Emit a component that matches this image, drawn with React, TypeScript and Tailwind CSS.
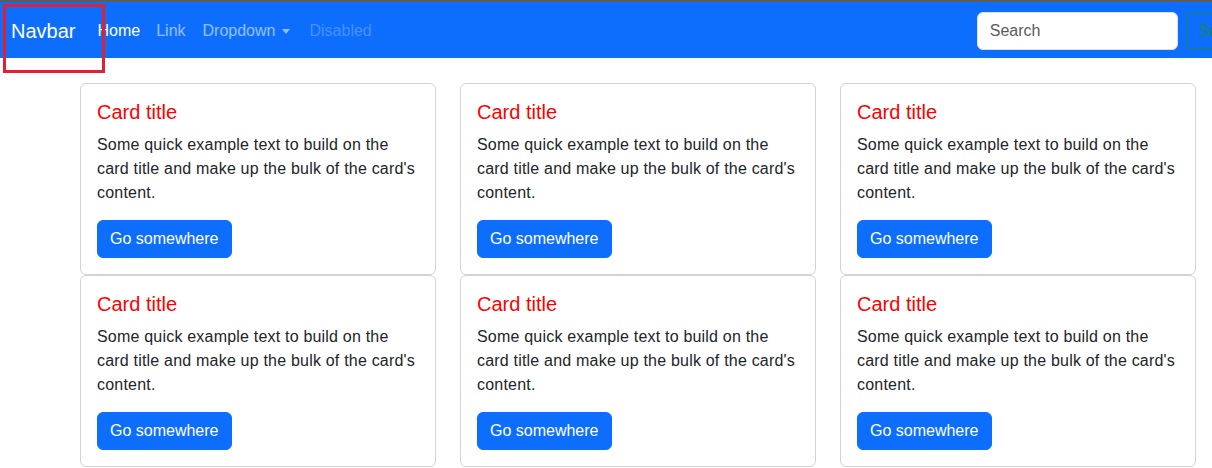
import React from "react";

function Card() {
  return (
    <div className="border border-[#d3d3d3] rounded-[6px] bg-white p-4 flex flex-col items-start">
      <h5 className="text-[20px] leading-[24px] font-medium text-[#ff0000] mb-2">Card title</h5>
      <p className="text-[16px] leading-[24px] text-[#212529] mb-4 tracking-[0.2px] pt-[1px]">
        Some quick example text to build on the card title and make up the bulk of the card's content.
      </p>
      <button className="bg-[#0d6efd] text-white text-[16px] leading-[24px] px-3 py-[6px] border border-[#0d6efd] rounded-[6px] -mt-[1px]">
        Go somewhere
      </button>
    </div>
  );
}

export default function App() {
  return (
    <div
      className="relative w-[1212px] h-[468px] overflow-hidden bg-white"
      style={{ fontFamily: '"Liberation Sans", Arial, sans-serif' }}
    >
      <div className="h-[2px] bg-[#5c5c5c]" />
      <nav className="h-[56px] bg-[#0d6efd] flex items-center pl-[11px] pt-[2px] w-[1300px]">
        <span className="text-white text-[20px] leading-[30px] mr-[14px]">Navbar</span>
        <div className="flex items-center text-[16px] leading-[24px]">
          <span className="px-2 text-white">Home</span>
          <span className="px-2 text-white/55">Link</span>
          <span className="px-2 ml-[1px] text-white/55 flex items-center">
            Dropdown
            <span className="ml-[7px] inline-block w-0 h-0 border-l-[4px] border-r-[4px] border-t-[5px] border-l-transparent border-r-transparent border-t-white/55 mt-[1px]" />
          </span>
          <span className="px-2 ml-[3px] text-white/25">Disabled</span>
        </div>
        <div className="ml-[597px] flex items-center gap-2">
          <div className="w-[201px] h-[38px] bg-white border border-[#dee2e6] rounded-[6px] px-3 flex items-center text-[16px] text-[#595c5f]">
            Search
          </div>
          <div className="h-[38px] px-3 border border-[#198754] rounded-[6px] flex items-center text-[16px] text-[#198754]">
            Search
          </div>
        </div>
      </nav>
      <div className="ml-[80px] mt-[25px] grid grid-cols-[356px_356px_356px] gap-x-6">
        <Card />
        <Card />
        <Card />
        <Card />
        <Card />
        <Card />
      </div>
      <div className="absolute left-[3px] top-[4px] w-[102px] h-[69px] border-[3px] border-[#e3202c]" />
    </div>
  );
}
